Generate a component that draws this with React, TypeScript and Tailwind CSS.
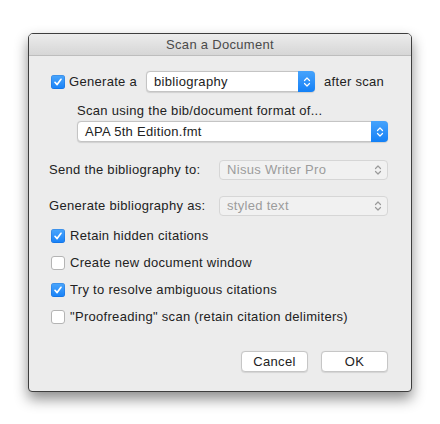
const font = { fontFamily: '"Liberation Sans", Arial, sans-serif' };

const Chevrons = ({ color }: { color: string }) => (
  <svg width="8" height="12" viewBox="0 0 8 12" fill="none" stroke={color} strokeWidth="1.2" strokeLinecap="round" strokeLinejoin="round">
    <path d="M1.5 4.5 L4 2 L6.5 4.5" />
    <path d="M1.5 7.5 L4 10 L6.5 7.5" />
  </svg>
);

const Check = ({ checked }: { checked: boolean }) =>
  checked ? (
    <span className="flex h-[14px] w-[14px] shrink-0 items-center justify-center rounded-[3px] bg-gradient-to-b from-[#4aa6fc] to-[#1481f7] shadow-[inset_0_0_0_0.5px_rgba(0,60,160,0.35)]">
      <svg width="10" height="10" viewBox="0 0 10 10" fill="none" stroke="white" strokeWidth="1.7" strokeLinecap="round" strokeLinejoin="round">
        <path d="M2 5.3 L4.1 7.6 L8 2.3" />
      </svg>
    </span>
  ) : (
    <span className="h-[14px] w-[14px] shrink-0 rounded-[3px] border border-[#b4b4b4] bg-white" />
  );

const BluePopup = ({ label, className }: { label: string; className: string }) => (
  <div className={`flex h-[21px] items-stretch rounded-[4px] border border-[#c4c4c4] bg-white shadow-[0_0.5px_1px_rgba(0,0,0,0.12)] ${className}`}>
    <span className="flex flex-1 items-center pl-[7px] text-[13px] tracking-[0.3px] text-[#222]">{label}</span>
    <span className="-my-px -mr-px flex w-[17px] items-center justify-center rounded-r-[4px] bg-gradient-to-b from-[#45a3fc] to-[#1180f6]">
      <Chevrons color="white" />
    </span>
  </div>
);

const GrayPopup = ({ label }: { label: string }) => (
  <div className="flex h-[20px] w-[169px] items-center justify-between rounded-[4px] border border-[#d6d6d6] bg-[#f1f1f1] pl-[7px] pr-[5px]">
    <span className="text-[13px] tracking-[0.3px] text-[#9c9c9c]">{label}</span>
    <Chevrons color="#9a9a9a" />
  </div>
);

const Option = ({ checked, label }: { checked: boolean; label: string }) => (
  <div className="flex h-[18px] items-center gap-[5px]">
    <Check checked={checked} />
    <span className="text-[13px] tracking-[0.3px] text-[#222]">{label}</span>
  </div>
);

const Button = ({ label }: { label: string }) => (
  <button className="h-[21px] w-[67px] rounded-[4px] border border-[#c6c6c6] bg-white text-[13px] tracking-[0.3px] text-[#222] shadow-[0_0.5px_1px_rgba(0,0,0,0.1)]">
    {label}
  </button>
);

export default function App() {
  return (
    <div className="h-[424px] w-[440px] bg-white pl-[28px] pt-[33px]" style={font}>
      <div className="flex h-[359px] w-[384px] flex-col overflow-hidden rounded-t-[5px] rounded-b-[4px] border border-[#3e3e3e] bg-[#ececec] shadow-[0_7px_14px_rgba(0,0,0,0.45)]">
        <div className="flex h-[22px] shrink-0 items-center justify-center border-b border-[#bdbdbd] bg-gradient-to-b from-[#ececec] to-[#d6d6d6] text-[13px] tracking-[0.3px] text-[#4a4a4a]">
          Scan a Document
        </div>

        <div className="flex flex-1 flex-col pl-[22px] pr-[23px] pt-[15px] tracking-[0.3px]">
          <div className="flex items-center">
            <Check checked />
            <span className="ml-[4px] text-[13px] text-[#222]">Generate a</span>
            <BluePopup label="bibliography" className="ml-[9px] w-[169px]" />
            <span className="ml-[9px] text-[13px] text-[#222]">after scan</span>
          </div>

          <div className="ml-[26px] mt-[11px] text-[13px] leading-[16px] text-[#222]">
            Scan using the bib/document format of...
          </div>
          <BluePopup label="APA 5th Edition.fmt" className="ml-[26px] mt-[2px]" />

          <div className="-ml-[2px] mt-[18px] flex items-center justify-between">
            <span className="text-[13px] text-[#222]">Send the bibliography to:</span>
            <GrayPopup label="Nisus Writer Pro" />
          </div>
          <div className="-ml-[2px] mt-[16px] flex items-center justify-between">
            <span className="text-[13px] text-[#222]">Generate bibliography as:</span>
            <GrayPopup label="styled text" />
          </div>

          <div className="mt-[11px] flex flex-col gap-[9px]">
            <Option checked label="Retain hidden citations" />
            <Option checked={false} label="Create new document window" />
            <Option checked label="Try to resolve ambiguous citations" />
            <Option checked={false} label={'"Proofreading" scan (retain citation delimiters)'} />
          </div>

          <div className="mt-[25px] flex justify-end gap-[13px]">
            <Button label="Cancel" />
            <Button label="OK" />
          </div>
        </div>
      </div>
    </div>
  );
}
